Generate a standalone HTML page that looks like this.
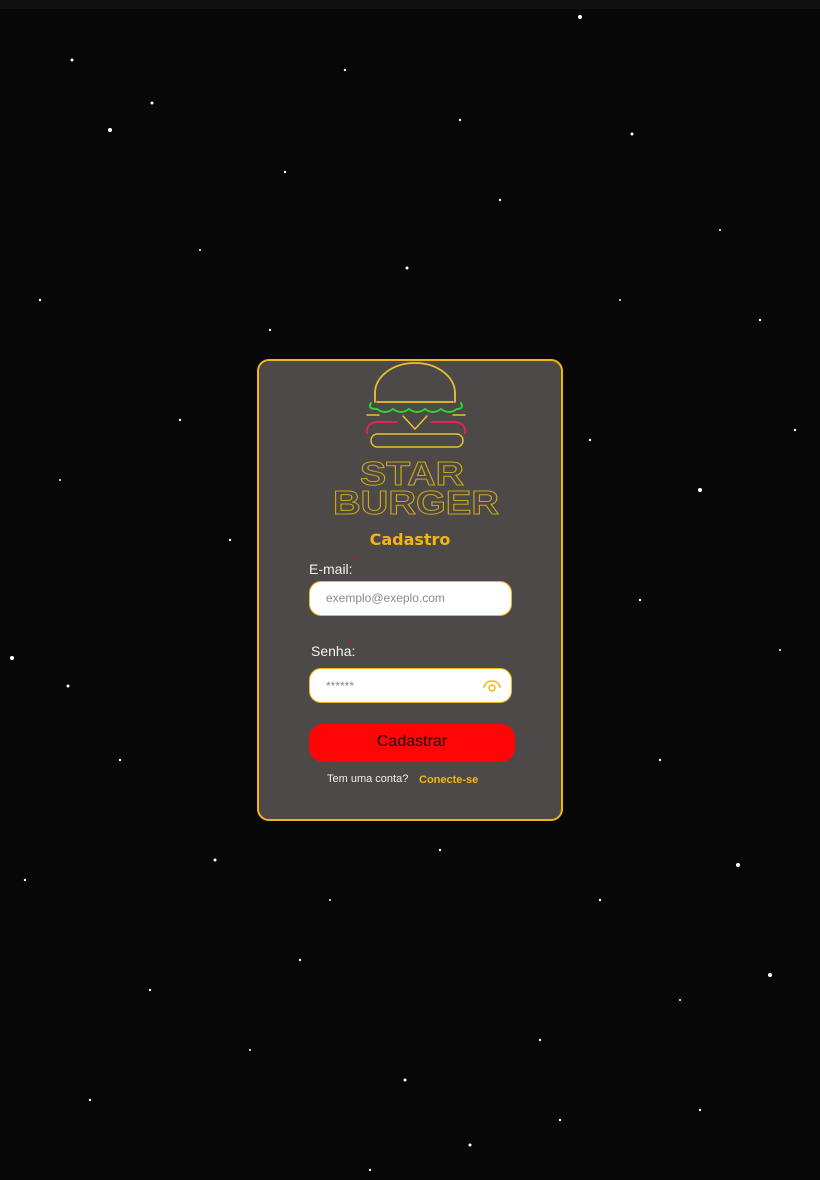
<!DOCTYPE html>
<html><head><meta charset="utf-8"><style>
html,body{margin:0;padding:0;width:820px;height:1180px;overflow:hidden;background:#080808;font-family:"Liberation Sans",sans-serif}
#bg{position:absolute;left:0;top:0}
.card{position:absolute;left:257px;top:359px;width:302px;height:458px;border:2px solid #f2b612;border-radius:12px;background:#4d4948}
.abs{position:absolute}
.lbl{color:#f2f2f2;font-size:14px}
.star{color:#e00;font-size:9px;position:absolute}
.inp{position:absolute;left:50px;width:201px;height:33px;background:#fff;border:1.5px solid #f2b612;border-radius:12px}
.ph{position:absolute;left:16px;top:9px;font-size:12px;color:#8a8a8a}
</style></head><body>
<svg id="bg" width="820" height="1180">
<rect width="820" height="9" fill="#111"/>
<g fill="#fff">
<circle cx="110" cy="130" r="2"/><circle cx="152" cy="103" r="1.5"/><circle cx="580" cy="17" r="2"/><circle cx="72" cy="60" r="1.5"/><circle cx="407" cy="268" r="1.5"/><circle cx="700" cy="490" r="2"/><circle cx="12" cy="658" r="2"/><circle cx="68" cy="686" r="1.5"/><circle cx="738" cy="865" r="2"/><circle cx="770" cy="975" r="2"/><circle cx="405" cy="1080" r="1.5"/><circle cx="470" cy="1145" r="1.5"/><circle cx="215" cy="860" r="1.5"/><circle cx="632" cy="134" r="1.5"/><circle cx="285" cy="172" r="1.2"/><circle cx="500" cy="200" r="1.2"/><circle cx="40" cy="300" r="1.2"/><circle cx="760" cy="320" r="1.2"/><circle cx="180" cy="420" r="1.2"/><circle cx="640" cy="600" r="1.2"/><circle cx="120" cy="760" r="1.2"/><circle cx="600" cy="900" r="1.2"/><circle cx="300" cy="960" r="1.2"/><circle cx="540" cy="1040" r="1.2"/><circle cx="90" cy="1100" r="1.2"/><circle cx="700" cy="1110" r="1.2"/><circle cx="230" cy="540" r="1.2"/><circle cx="590" cy="440" r="1.2"/><circle cx="345" cy="70" r="1.2"/><circle cx="460" cy="120" r="1.2"/><circle cx="25" cy="880" r="1.2"/><circle cx="795" cy="430" r="1.2"/><circle cx="270" cy="330" r="1.2"/><circle cx="660" cy="760" r="1.2"/><circle cx="150" cy="990" r="1.2"/><circle cx="370" cy="1170" r="1.2"/><circle cx="560" cy="1120" r="1.2"/><circle cx="440" cy="850" r="1.2"/><circle cx="200" cy="250" r="1"/><circle cx="720" cy="230" r="1"/><circle cx="60" cy="480" r="1"/><circle cx="780" cy="650" r="1"/><circle cx="620" cy="300" r="1"/><circle cx="330" cy="900" r="1"/><circle cx="250" cy="1050" r="1"/><circle cx="680" cy="1000" r="1"/>
</g></svg>
<div class="card">
<svg class="abs" style="left:0;top:0" width="302" height="170">
<g fill="none" stroke-linecap="round">
<path d="M116 32 A40 30 0 0 1 196 32" stroke="#e8c22c" stroke-width="1.8"/>
<line x1="116" y1="32" x2="116" y2="41" stroke="#e8c22c" stroke-width="1.8"/>
<line x1="196" y1="32" x2="196" y2="41" stroke="#e8c22c" stroke-width="1.8"/>
<line x1="118" y1="41" x2="194" y2="41" stroke="#e8c22c" stroke-width="1.8"/>
<path d="M112 42 Q108 48 118 48 Q126 54 134 48 Q142 54 150 48 Q158 54 166 48 Q174 54 182 48 Q190 54 198 48 Q205 48 202 42" stroke="#2bd62b" stroke-width="2"/>
<line x1="108" y1="54" x2="120" y2="54" stroke="#e8c22c" stroke-width="1.5"/>
<line x1="194" y1="54" x2="206" y2="54" stroke="#e8c22c" stroke-width="1.5"/>
<path d="M144 55 L156 68 L168 55" stroke="#e8c22c" stroke-width="1.5"/>
<path d="M108 72 Q107 62 118 61 L138 61 M172 61 L196 61 Q207 62 206 72" stroke="#e0245a" stroke-width="2"/>
<rect x="112" y="73" width="92" height="13" rx="6.5" stroke="#e8c22c" stroke-width="1.5"/>
</g>
<g font-family="Liberation Sans,sans-serif" font-weight="bold" fill="none" stroke="#c9a818" stroke-width="1" text-anchor="middle">
<text x="153" y="124" font-size="33" textLength="104" lengthAdjust="spacingAndGlyphs">STAR</text>
<text x="157" y="153" font-size="33" textLength="166" lengthAdjust="spacingAndGlyphs">BURGER</text>
</g></svg>
<div class="abs" style="left:0;width:302px;top:169px;text-align:center;font-family:'DejaVu Sans',sans-serif;font-weight:bold;font-size:16px;color:#f2b612">Cadastro</div>
<div class="abs lbl" style="left:50px;top:200px">E-mail:<span class="star" style="left:45px;top:-6px">*</span></div>
<div class="inp" style="top:220px"><span class="ph">exemplo@exeplo.com</span></div>
<div class="abs lbl" style="left:52px;top:282px">Senha:<span class="star" style="left:38px;top:-6px">*</span></div>
<div class="inp" style="top:307px"><span class="ph" style="top:10px">******</span>
<svg class="abs" style="left:172px;top:9px" width="20" height="16" fill="none" stroke="#f2b612" stroke-width="1.5"><path d="M2 10 A8 7 0 0 1 18 10"/><circle cx="10" cy="10" r="3"/></svg></div>
<div class="abs" style="left:50px;top:363px;width:206px;height:38px;background:#ff0505;border-radius:14px;text-align:center;line-height:36px;font-size:16px;color:#111">Cadastrar</div>
<div class="abs" style="left:68px;top:412px;font-size:11px;color:#eee">Tem uma conta?</div>
<div class="abs" style="left:160px;top:413px;font-size:11px;font-weight:bold;color:#f2b612">Conecte-se</div>
</div>
</body></html>
